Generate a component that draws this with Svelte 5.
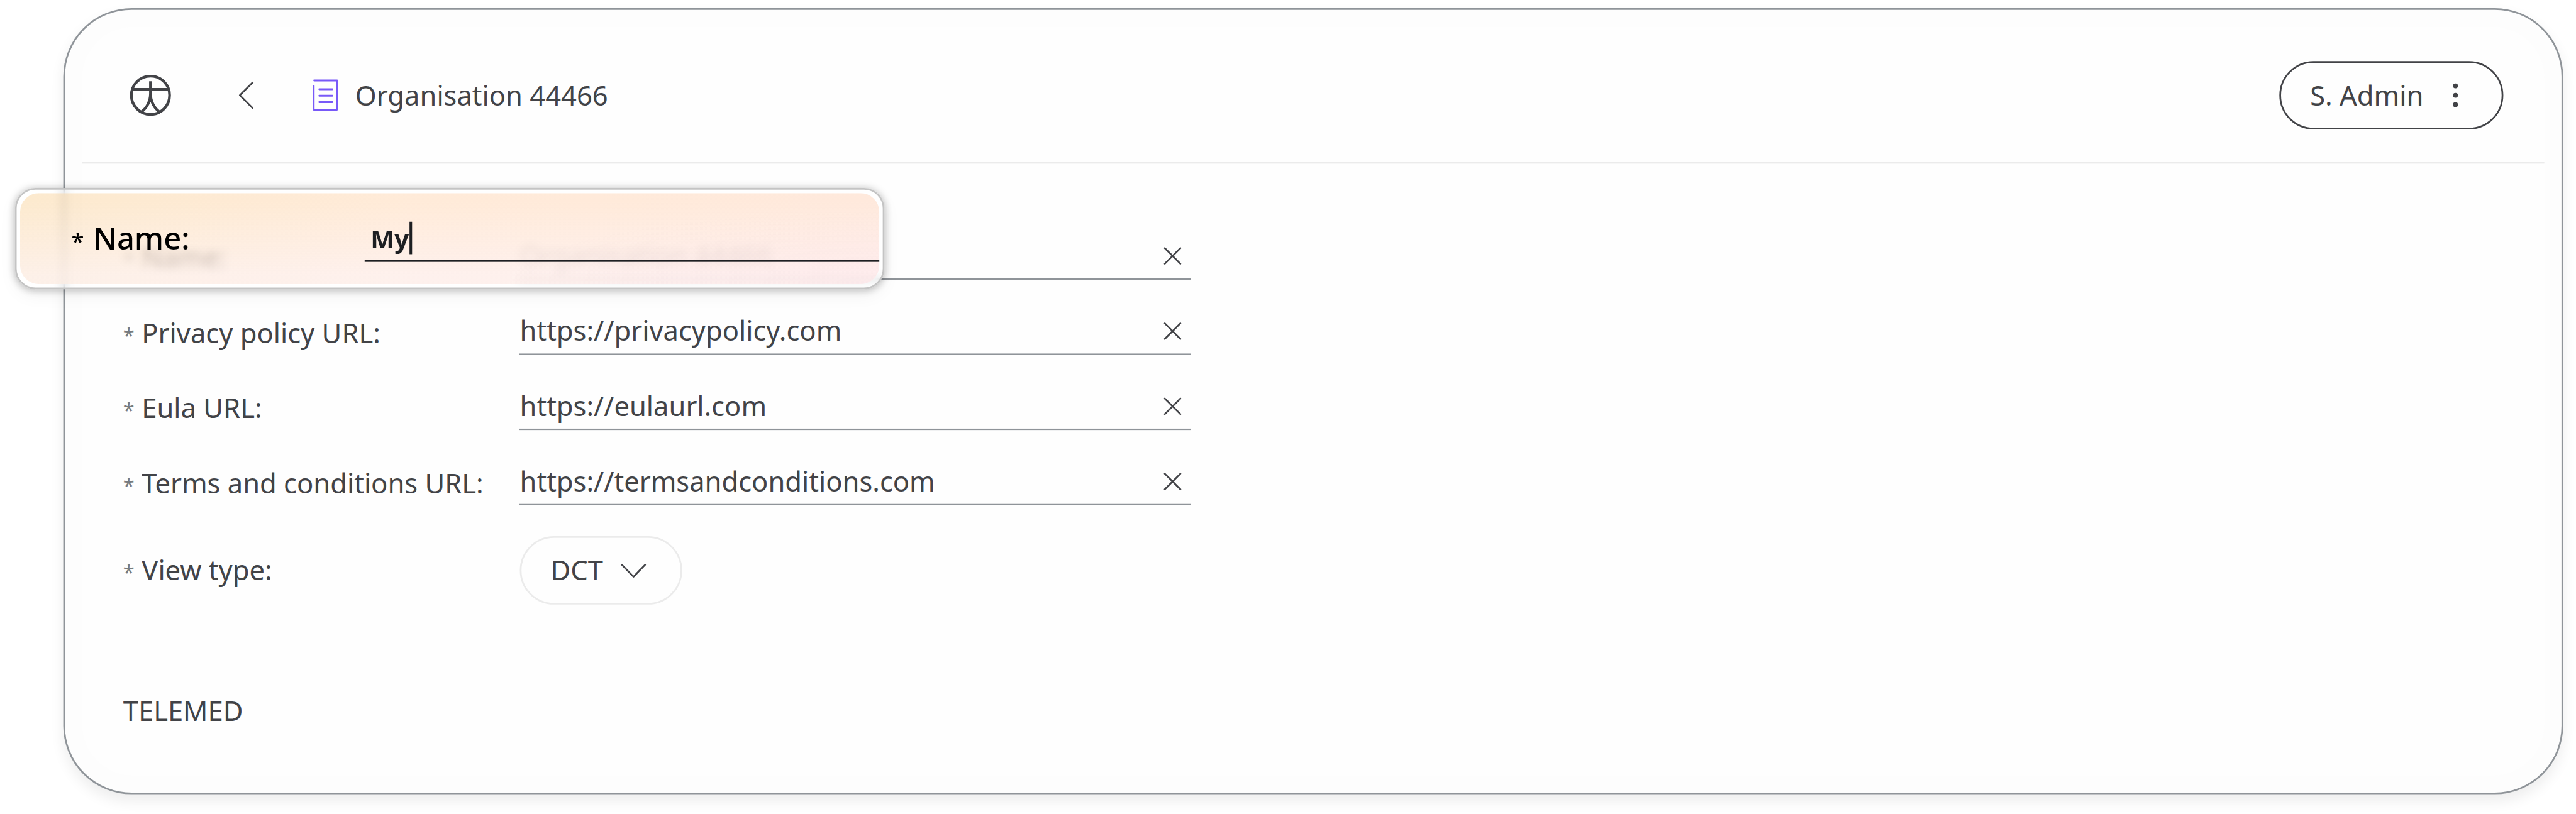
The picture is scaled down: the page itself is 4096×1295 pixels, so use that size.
<script>
  const rows = [
    { label: 'Name:', value: 'Organisation 44466', muted: true },
    { label: 'Privacy policy URL:', value: 'https://privacypolicy.com' },
    { label: 'Eula URL:', value: 'https://eulaurl.com' },
    { label: 'Terms and conditions URL:', value: 'https://termsandconditions.com' }
  ];
</script>

<div class="viewport">
  <div class="stage">
    <div class="frame">
      <main class="screen">
        <header class="topbar">
          <svg class="person" viewBox="0 0 96 96">
            <circle cx="48" cy="48" r="44.8" />
            <path d="M48 15V46M6 34H90M48 34V44C48 61 40 77 28 86M48 44C48 61 56 77 68 86" />
          </svg>
          <svg class="back" viewBox="0 0 64 64"><path d="M47 2L17 32L47 62" /></svg>
          <svg class="doc" viewBox="0 0 64 80">
            <path d="M7 5.2H60.3V73.8H5.7V18M19 26H49.5M19 41H49.5M19 56H49.5" />
          </svg>
          <h1>Organisation 44466</h1>
          <button class="user">
            <span>S. Admin</span>
            <svg viewBox="0 0 16 64"><circle cx="8" cy="10" r="5.8" /><circle cx="8" cy="32" r="5.8" /><circle cx="8" cy="54" r="5.8" /></svg>
          </button>
        </header>

        <section class="form">
          {#each rows as row}
            <div class="row">
              <div class="label"><span class="star">*</span><span>{row.label}</span></div>
              <div class="field">
                <span class:muted={row.muted}>{row.value}</span>
                <svg class="clear" viewBox="0 0 44 44"><path d="M3.7 3.7L40.3 40.3M40.3 3.7L3.7 40.3" /></svg>
              </div>
            </div>
          {/each}
          <div class="row view">
            <div class="label"><span class="star">*</span><span>View type:</span></div>
            <button class="select">
              <span>DCT</span>
              <svg viewBox="0 0 64 36"><path d="M5 4L32 32L59 4" /></svg>
            </button>
          </div>
          <h2>TELEMED</h2>
        </section>
      </main>
    </div>

    <div class="callout">
      <div class="tint">
        <div class="callout-label"><span class="callout-star">*</span><span>Name:</span></div>
        <div class="callout-field"><span>My</span><i class="caret"></i></div>
      </div>
    </div>
  </div>
</div>

<style>
  :global(body) {
    margin: 0;
    background: #fff;
  }
  .viewport {
    width: 4096px;
    height: 1295px;
    overflow: hidden;
  }
  .stage {
    position: relative;
    box-sizing: border-box;
    width: 6026px;
    height: 1905px;
    padding: 18.5px 30px 0 148px;
    transform: scale(0.679721);
    transform-origin: 0 0;
    font-family: 'Noto Sans', sans-serif;
    font-size: 64px;
    line-height: 88px;
    color: #424347;
  }
  svg {
    display: block;
    flex: none;
    fill: none;
    stroke: #424347;
    stroke-width: 4;
    stroke-linecap: round;
    stroke-linejoin: round;
  }
  .frame {
    box-sizing: border-box;
    height: 1840px;
    padding: 40px;
    border: 4px solid #8f9499;
    border-radius: 160px;
    background: #fdfdfd;
    box-shadow: 0 16px 32px rgba(0, 0, 0, 0.07);
  }
  .screen {
    height: 1752px;
    border-radius: 120px;
    background: #fefefe;
  }
  .topbar {
    display: flex;
    align-items: center;
    box-sizing: border-box;
    height: 320.5px;
    padding: 3.5px 96px 0 112px;
    border-bottom: 4px solid #ebebeb;
  }
  .person {
    width: 96px;
    height: 96px;
    stroke-width: 6.4;
    stroke-linecap: butt;
  }
  .back {
    width: 64px;
    height: 64px;
    margin-left: 144px;
  }
  .doc {
    width: 64px;
    height: 80px;
    margin-left: 120px;
    stroke: #7859f8;
    stroke-width: 4.4;
  }
  h1,
  h2 {
    margin: 0;
    font-size: 64px;
    font-weight: 400;
  }
  h1 {
    margin-left: 39px;
  }
  button {
    display: flex;
    align-items: center;
    box-sizing: border-box;
    height: 160px;
    border: 4px solid #424347;
    border-radius: 80px;
    background: none;
    color: inherit;
    font: inherit;
  }
  .user {
    justify-content: space-between;
    width: 524px;
    margin-left: auto;
    padding: 0 100px 0 68px;
  }
  .user svg {
    width: 16px;
    height: 64px;
    fill: #424347;
    stroke: none;
  }
  .form {
    padding: 95.6px 0 0 96px;
  }
  .row {
    display: grid;
    grid-template-columns: 926px 1572px;
    align-items: end;
    height: 176px;
  }
  .label {
    display: flex;
    align-items: baseline;
    gap: 17px;
    height: 96px;
    white-space: nowrap;
  }
  .star {
    font-size: 48px;
    color: #777b80;
  }
  .field {
    display: flex;
    align-items: center;
    justify-content: space-between;
    box-sizing: border-box;
    height: 108.6px;
    padding: 0 21px 0 2px;
    border-bottom: 4px solid #8f9499;
    border-radius: 2px;
  }
  .muted {
    color: #b9babd;
  }
  .clear {
    width: 44px;
    height: 44px;
    margin-top: 1px;
  }
  .view {
    align-items: center;
    height: 160px;
    margin-top: 72px;
  }
  .view .label {
    height: 89px;
  }
  .select {
    gap: 39px;
    width: 380px;
    margin-left: 2px;
    padding: 0 0 1px 68px;
    border-color: #ebebeb;
  }
  .select svg {
    width: 64px;
    height: 36px;
    margin-top: 3px;
  }
  h2 {
    margin-top: 204px;
  }
  .callout {
    position: absolute;
    left: 35px;
    top: 440px;
    box-sizing: border-box;
    width: 2034px;
    height: 237px;
    padding: 8px;
    border: 4px solid #c4c4c4;
    border-radius: 48px;
    background: rgba(255, 255, 255, 0.2);
    backdrop-filter: blur(10px);
    box-shadow: 0 2px 18px rgba(0, 0, 0, 0.26), 0 14px 40px rgba(0, 0, 0, 0.05);
  }
  .tint {
    display: flex;
    box-sizing: border-box;
    height: 213px;
    padding-left: 120px;
    border-radius: 44px;
    background:
      radial-gradient(ellipse 900px 170px at 100% 100%, rgba(250, 210, 225, 0.16), rgba(250, 210, 225, 0)),
      linear-gradient(180deg, rgba(253, 246, 255, 0) 10%, rgba(253, 246, 255, 0.52) 90%),
      linear-gradient(95deg, rgba(249, 208, 148, 0.45), rgba(255, 210, 170, 0.45) 45%, rgba(254, 206, 178, 0.45));
  }
  .callout-label {
    display: flex;
    align-items: baseline;
    gap: 21px;
    width: 686px;
    padding-top: 59.5px;
    font-size: 72px;
    font-weight: 500;
    color: #000;
  }
  .callout-star {
    font-size: 54px;
  }
  .callout-field {
    display: flex;
    align-items: center;
    flex: 1;
    box-sizing: border-box;
    height: 161px;
    padding: 55px 0 0 14px;
    border-bottom: 4px solid #1d1f22;
    font-size: 59px;
    font-weight: 700;
    color: #1d1f22;
  }
  .caret {
    width: 6px;
    height: 76px;
    margin: -2px 0 0 2px;
    background: #1d1f22;
  }
</style>
